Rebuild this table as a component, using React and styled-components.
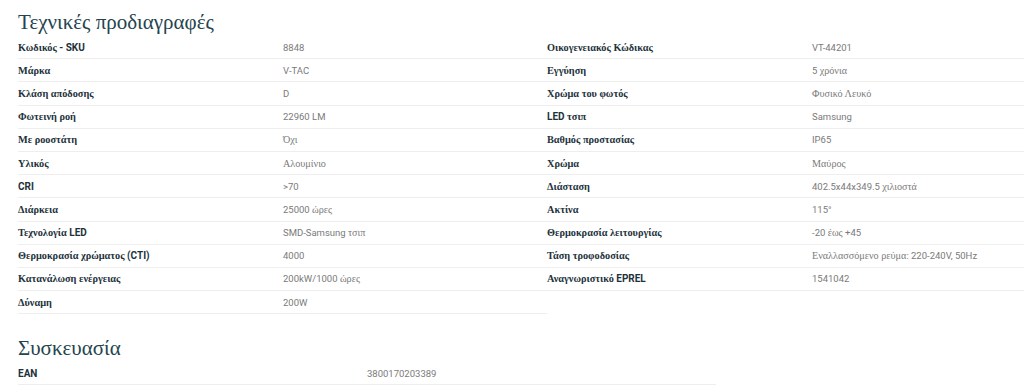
import React from "react";
import styled, { createGlobalStyle } from "styled-components";

const Global = createGlobalStyle`
  html, body { margin: 0; padding: 0; background: #fff; overflow: hidden; }
  body { font-family: Roboto, "Liberation Sans", sans-serif; }
`;

const Page = styled.div`
  padding: 9px 0 0 18px;
  width: 1024px;
  box-sizing: border-box;
`;

const Title = styled.h2`
  margin: ${(p) => (p.$spaced ? "21px" : "0")} 0 0;
  font-family: "Liberation Serif", "DejaVu Serif", serif;
  font-weight: 400;
  font-size: 21px;
  line-height: 27px;
  color: #24444f;
`;

const SpecGrid = styled.div`
  display: grid;
  grid-template-columns: 529px 1fr;
  align-items: start;
`;

const Column = styled.div`
  display: flex;
  flex-direction: column;
`;

const Table = styled.div`
  display: flex;
  flex-direction: column;
  width: ${(p) => p.$width}px;
`;

const Row = styled.div`
  display: grid;
  grid-template-columns: ${(p) => p.$label}px 1fr;
  align-items: center;
  height: 23.2px;
  box-sizing: border-box;
  border-bottom: 1px solid #eeeeee;
`;

const Label = styled.div`
  font-family: Roboto, "Liberation Sans", sans-serif;
  font-size: 10px;
  font-weight: 700;
  color: #1d323b;
  white-space: nowrap;
`;

const Value = styled.div`
  font-family: Roboto, "Liberation Sans", sans-serif;
  font-size: 9.5px;
  font-weight: 400;
  color: #7a7a7a;
  white-space: nowrap;
`;

const Greek = styled.span`
  font-family: "Liberation Serif", "DejaVu Serif", serif;
  font-size: ${(p) => p.$scale}em;
`;

const greekRun = /([\u0370-\u03FF\u1F00-\u1FFF]+(?:[\s]+[\u0370-\u03FF\u1F00-\u1FFF]+)*)/g;

function Mixed({ text, scale }) {
  const parts = text.split(greekRun);
  return parts.map((p, i) =>
    i % 2 === 1 ? (
      <Greek key={i} $scale={scale}>
        {p}
      </Greek>
    ) : (
      <React.Fragment key={i}>{p}</React.Fragment>
    )
  );
}

const left = [
  ["Κωδικός - SKU", "8848"],
  ["Μάρκα", "V-TAC"],
  ["Κλάση απόδοσης", "D"],
  ["Φωτεινή ροή", "22960 LM"],
  ["Με ροοστάτη", "Όχι"],
  ["Υλικός", "Αλουμίνιο"],
  ["CRI", ">70"],
  ["Διάρκεια", "25000 ώρες"],
  ["Τεχνολογία LED", "SMD-Samsung τσιπ"],
  ["Θερμοκρασία χρώματος (CTI)", "4000"],
  ["Κατανάλωση ενέργειας", "200kW/1000 ώρες"],
  ["Δύναμη", "200W"],
];

const right = [
  ["Οικογενειακός Κώδικας", "VT-44201"],
  ["Εγγύηση", "5 χρόνια"],
  ["Χρώμα του φωτός", "Φυσικό Λευκό"],
  ["LED τσιπ", "Samsung"],
  ["Βαθμός προστασίας", "IP65"],
  ["Χρώμα", "Μαύρος"],
  ["Διάσταση", "402.5x44x349.5 χιλιοστά"],
  ["Ακτίνα", "115°"],
  ["Θερμοκρασία λειτουργίας", "-20 έως +45"],
  ["Τάση τροφοδοσίας", "Εναλλασσόμενο ρεύμα: 220-240V, 50Hz"],
  ["Αναγνωριστικό EPREL", "1541042"],
];

function SpecRow({ label, value, labelWidth }) {
  return (
    <Row $label={labelWidth}>
      <Label>
        <Mixed text={label} scale={1.03} />
      </Label>
      <Value>
        <Mixed text={value} scale={1.07} />
      </Value>
    </Row>
  );
}

export default function App() {
  return (
    <>
      <Global />
      <Page>
        <Title>Τεχνικές προδιαγραφές</Title>
        <SpecGrid>
          <Column>
            {left.map(([l, v]) => (
              <SpecRow key={l} label={l} value={v} labelWidth={265} />
            ))}
          </Column>
          <Column>
            {right.map(([l, v]) => (
              <SpecRow key={l} label={l} value={v} labelWidth={265} />
            ))}
          </Column>
        </SpecGrid>
        <Title $spaced>Συσκευασία</Title>
        <Table $width={698}>
          <SpecRow label="EAN" value="3800170203389" labelWidth={349} />
        </Table>
      </Page>
    </>
  );
}
